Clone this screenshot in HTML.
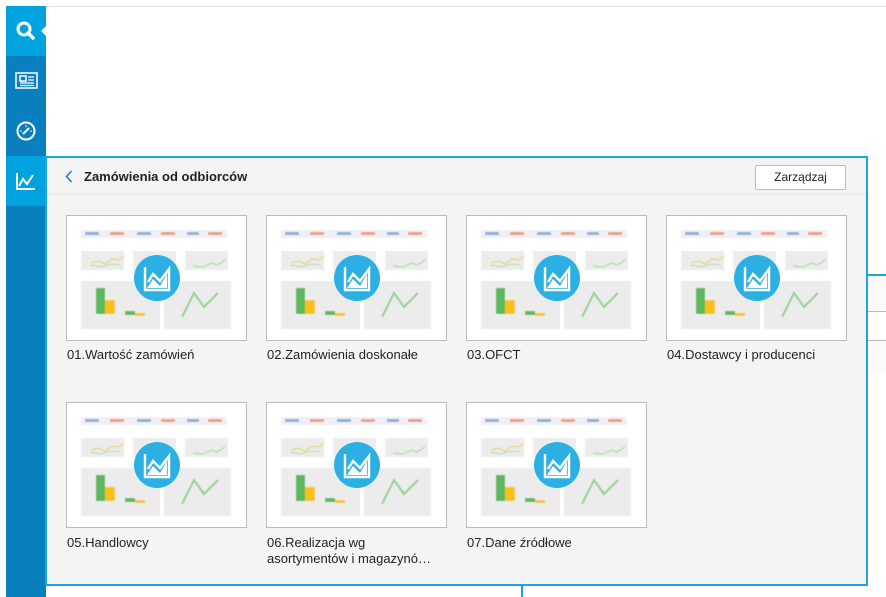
<!DOCTYPE html>
<html><head><meta charset="utf-8"><style>
*{margin:0;padding:0;box-sizing:border-box}
body{width:886px;height:597px;overflow:hidden;background:#fff;position:relative;font-family:"Liberation Sans",Roboto,sans-serif}
.abs{position:absolute}
.side{left:6px;top:6px;width:40px;height:591px;background:#0a7fbd}
.tile{position:absolute;left:6px;width:40px;height:50px;background:#00a3e0;display:flex;align-items:center;justify-content:center}
.panel{left:45px;top:156px;width:823px;height:430px;border:2px solid #1ba6df;background:#f4f4f4}
.hdr{position:absolute;left:0;top:0;right:0;height:37px;border-bottom:2px solid #e9e9e9;background:#f4f4f4}
.title{position:absolute;left:37px;top:11px;font-size:13px;font-weight:bold;color:#222}
.btn{position:absolute;left:708px;top:7px;width:91px;height:25px;border:1px solid #bdbdbd;background:#fff;border-radius:2px;font-size:12px;color:#222;text-align:center;line-height:23px}
.card{position:absolute;width:181px;height:126px;border:1px solid #bcbcbc;background:#fff}
.lbl{position:absolute;font-size:13px;color:#222;line-height:16px;width:185px;white-space:nowrap}
</style></head><body>
<div class="abs" style="left:46px;top:6px;width:840px;height:1px;background:#e2e2e2"></div>
<div class="abs side"></div>
<div class="tile" style="top:6px"><svg width="22" height="22" viewBox="0 0 22 22"><circle cx="9" cy="9" r="6" fill="none" stroke="#fff" stroke-width="3"/><path d="M13 13l5 5" stroke="#fff" stroke-width="3.5" stroke-linecap="round"/></svg></div>
<div class="abs" style="left:41px;top:26px;width:0;height:0;border-top:5px solid transparent;border-bottom:5px solid transparent;border-right:5px solid #fff"></div>
<svg class="abs" style="left:15px;top:72px" width="23" height="17" viewBox="0 0 23 17"><rect x="1" y="1" width="21" height="15" fill="none" stroke="#fff" stroke-width="1.5"/><rect x="5" y="4" width="6" height="5" fill="none" stroke="#fff" stroke-width="1.5"/><path d="M13 5h6M13 8h6M5 11h14M5 13.5h14" stroke="#fff" stroke-width="1.3"/></svg>
<svg class="abs" style="left:16px;top:121px" width="20" height="20" viewBox="0 0 20 20"><circle cx="10" cy="10" r="8.5" fill="none" stroke="#fff" stroke-width="2"/><path d="M7 13l6-6" stroke="#fff" stroke-width="2"/><circle cx="10" cy="5" r=".8" fill="#fff"/><circle cx="5" cy="10" r=".8" fill="#fff"/><circle cx="15" cy="10" r=".8" fill="#fff"/></svg>
<div class="tile" style="top:156px"><svg width="20" height="18" viewBox="0 0 20 18"><path d="M1 1v16h18" fill="none" stroke="#fff" stroke-width="2"/><path d="M3 14l4-7 4 5 6-9" fill="none" stroke="#fff" stroke-width="2"/></svg></div>
<div class="abs" style="left:868px;top:274px;width:18px;height:2px;background:#1ba6df"></div>
<div class="abs" style="left:868px;top:276px;width:18px;height:35px;background:#fafafa"></div>
<div class="abs" style="left:868px;top:311px;width:18px;height:1px;background:#bbb"></div>
<div class="abs" style="left:868px;top:340px;width:18px;height:1px;background:#bbb"></div>
<div class="abs" style="left:868px;top:341px;width:18px;height:34px;background:#fafafa"></div>
<div class="abs" style="left:521px;top:586px;width:2px;height:11px;background:#1ba6df"></div>
<div class="abs panel">
<div class="hdr"><svg style="position:absolute;left:18px;top:12px" width="8" height="13" viewBox="0 0 8 13"><path d="M6.5 1L1.5 6.5l5 5.5" fill="none" stroke="#2a7bbf" stroke-width="1.6"/></svg><div class="title">Zamówienia od odbiorców</div><div class="btn">Zarządzaj</div></div>
</div>
<svg width="0" height="0" style="position:absolute"><defs>
<filter id="bl"><feGaussianBlur stdDeviation="0.6"/></filter>
<g id="th">
<g filter="url(#bl)">
<rect x="14" y="14" width="146" height="8" fill="#eef0f3"/>
<rect x="18" y="16" width="14" height="3" fill="#8fb1d8"/><rect x="43" y="16" width="14" height="3" fill="#ef9c88"/><rect x="70" y="16" width="14" height="3" fill="#8fb1d8"/><rect x="94" y="16" width="14" height="3" fill="#ef9c88"/><rect x="120" y="16" width="12" height="3" fill="#8fb1d8"/><rect x="141" y="16" width="14" height="3" fill="#ef9c88"/>
<rect x="14" y="35" width="43" height="19" fill="#ececec"/><path d="M24 47l8-2 6 3 7-5 7 1 5-4" fill="none" stroke="#e8d46a" stroke-width="1.2"/><path d="M24 49l10 2 10-3 10 1" fill="none" stroke="#b8d8a8" stroke-width="1"/>
<rect x="66" y="35" width="43" height="19" fill="#ececec"/>
<rect x="118" y="35" width="43" height="19" fill="#ececec"/><path d="M126 50l10 1 8-4 6 2 8-5" fill="none" stroke="#a8d8a0" stroke-width="1.2"/>
<rect x="14" y="65" width="79" height="48" fill="#ececec"/>
<rect x="29" y="72" width="9" height="26" fill="#5cb85c"/><rect x="38" y="84" width="10" height="14" fill="#f8c21a"/>
<rect x="58" y="95" width="10" height="4" fill="#5cb85c"/><rect x="68" y="97" width="10" height="3" fill="#f8c21a"/>
<rect x="97" y="65" width="67" height="48" fill="#ececec"/><path d="M115 101l12-24 10 14 14-14" fill="none" stroke="#8fd08f" stroke-width="2"/>
</g>
<circle cx="90" cy="62" r="23" fill="#2cb0e4"/>
<path d="M78 51v23h24V53l-9 12-7-7-5 8" fill="none" stroke="#fff" stroke-width="2.4"/>
<path d="M80 72l6-9 7 7 7-12v14H80z" fill="#fff"/>
</g></defs></svg>
<div class="card" style="left:66px;top:215px"><svg width="179" height="124"><use href="#th"/></svg></div>
<div class="card" style="left:266px;top:215px"><svg width="179" height="124"><use href="#th"/></svg></div>
<div class="card" style="left:466px;top:215px"><svg width="179" height="124"><use href="#th"/></svg></div>
<div class="card" style="left:666px;top:215px"><svg width="179" height="124"><use href="#th"/></svg></div>
<div class="card" style="left:66px;top:402px"><svg width="179" height="124"><use href="#th"/></svg></div>
<div class="card" style="left:266px;top:402px"><svg width="179" height="124"><use href="#th"/></svg></div>
<div class="card" style="left:466px;top:402px"><svg width="179" height="124"><use href="#th"/></svg></div>
<div class="lbl" style="left:67px;top:347px">01.Wartość zamówień</div>
<div class="lbl" style="left:267px;top:347px">02.Zamówienia doskonałe</div>
<div class="lbl" style="left:467px;top:347px">03.OFCT</div>
<div class="lbl" style="left:667px;top:347px">04.Dostawcy i producenci</div>
<div class="lbl" style="left:67px;top:535px">05.Handlowcy</div>
<div class="lbl" style="left:267px;top:535px">06.Realizacja wg<br>asortymentów i magazynó…</div>
<div class="lbl" style="left:467px;top:535px">07.Dane źródłowe</div>
</body></html>
